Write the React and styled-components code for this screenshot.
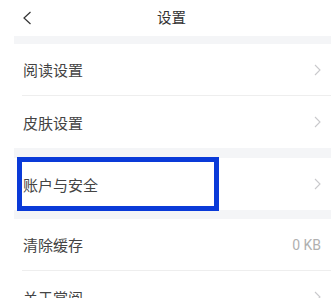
import React from 'react';
import styled, { createGlobalStyle } from 'styled-components';

const GlobalStyle = createGlobalStyle`
  html, body {
    margin: 0;
    padding: 0;
    background: #ffffff;
    font-family: "Noto Sans CJK SC", "Noto Sans", sans-serif;
  }
`;

const groups = [
  [
    { label: '阅读设置', arrow: true },
    { label: '皮肤设置', arrow: true },
  ],
  [{ label: '账户与安全', arrow: true, marked: true }],
  [
    { label: '清除缓存', value: '0 KB' },
    { label: '关于掌阅', arrow: true },
  ],
];

function Chevron() {
  return (
    <svg width="7" height="12" viewBox="0 0 7 12">
      <path d="M1 1l5 5-5 5" fill="none" stroke="#c9c9cc" strokeWidth="1.1" />
    </svg>
  );
}

export default function App() {
  return (
    <>
      <GlobalStyle />
      <Screen>
        <Header>
          <BackButton>
            <svg width="10" height="14" viewBox="0 0 10 14">
              <path d="M8.5 1L2 7l6.5 6" fill="none" stroke="#333" strokeWidth="1.2" />
            </svg>
          </BackButton>
          <Title>设置</Title>
        </Header>
        {groups.map((rows, gi) => (
          <Group key={gi} $gap={gi === 0 ? 8 : gi === 1 ? 10 : 9}>
            {rows.map((row) => (
              <Row key={row.label}>
                <Label>{row.label}</Label>
                {row.value && <Value>{row.value}</Value>}
                {row.arrow && <Chevron />}
                {row.marked && <Highlight />}
              </Row>
            ))}
          </Group>
        ))}
      </Screen>
    </>
  );
}

const Screen = styled.div`
  margin-left: 14px;
  width: 317px;
  height: 298px;
  overflow: hidden;
  background: #f4f5f7;
`;

const Header = styled.div`
  position: relative;
  height: 36px;
  background: #ffffff;
  display: flex;
  align-items: center;
  justify-content: center;
`;

const BackButton = styled.div`
  position: absolute;
  left: 8px;
  top: 11px;
  display: flex;
`;

const Title = styled.div`
  font-size: 14.5px;
  color: #333;
  transform: translate(-1px, -2px);
`;

const Group = styled.div`
  margin-top: ${(p) => p.$gap}px;
  background: #ffffff;
`;

const Row = styled.div`
  position: relative;
  box-sizing: border-box;
  height: 52px;
  margin-left: 8px;
  padding-right: 10px;
  padding-left: 1px;
  display: flex;
  align-items: center;
  border-bottom: 1px solid #eeeeee;

  &:last-child {
    border-bottom: none;
  }
`;

const Label = styled.div`
  flex: 1;
  font-size: 15px;
  color: #444;
`;

const Value = styled.div`
  font-size: 14px;
  color: #b0b0b0;
  font-family: "Roboto", "Noto Sans", sans-serif;
`;

const Highlight = styled.div`
  position: absolute;
  left: -5px;
  top: -1px;
  width: 202px;
  height: 54px;
  box-sizing: border-box;
  border: 5.5px solid #0a3ad8;
`;
